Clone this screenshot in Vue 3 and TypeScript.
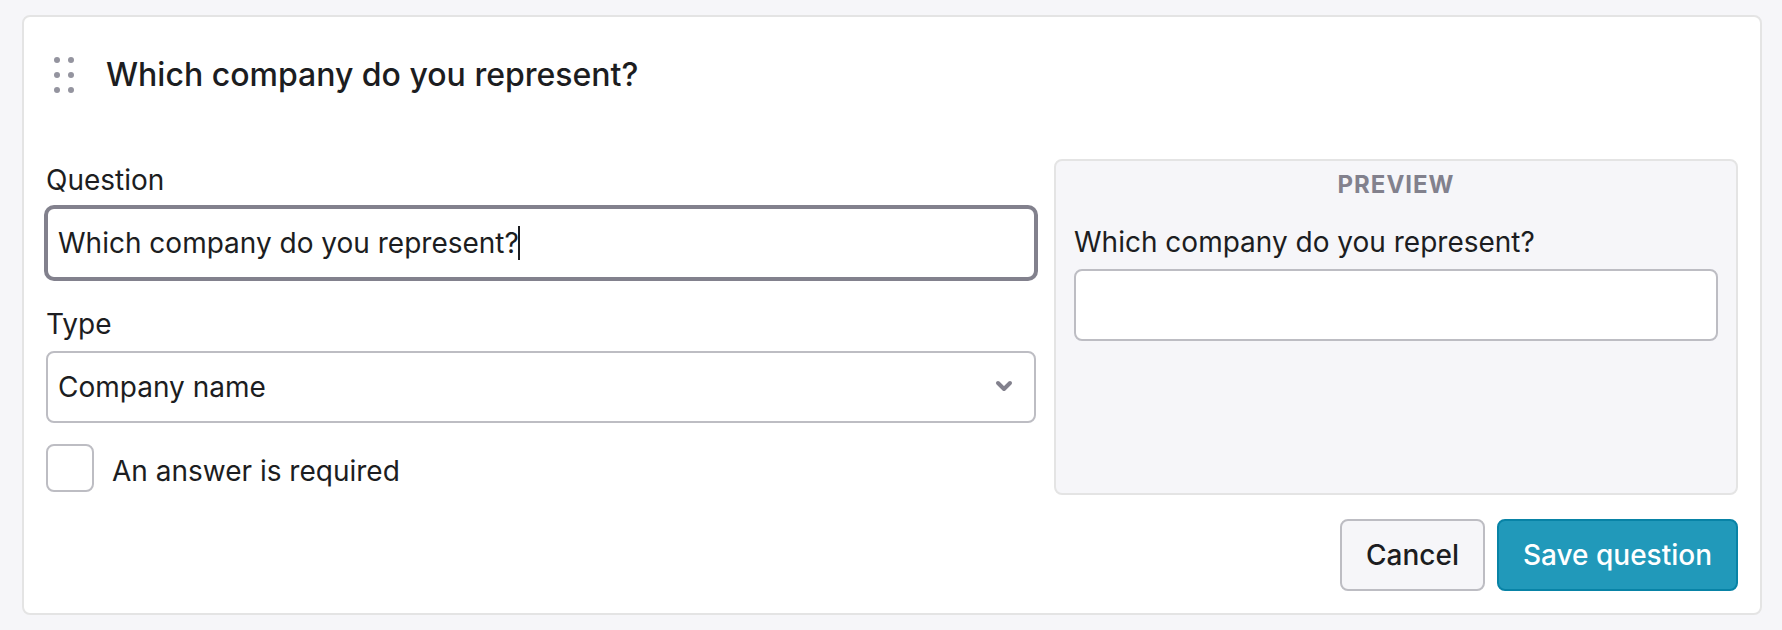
<script setup lang="ts">
import { computed, nextTick, onMounted, ref } from 'vue'

const question = ref('Which company do you represent?')
const answerType = ref('Company name')
const required = ref(false)
const previewAnswer = ref('')

const answerTypes = ['Company name', 'Short text', 'Long text', 'Multiple choice']

const handleDots = [12, 27, 42].flatMap((y) => [11, 25].map((x) => ({ x, y })))

const questionInput = ref<HTMLInputElement | null>(null)
const focused = ref(false)
const caretOffset = ref(0)
const caretStyle = computed(() => ({ left: `${caretOffset.value}px` }))

function placeCaret(): void {
  const input = questionInput.value
  if (!input) return
  const context = document.createElement('canvas').getContext('2d')
  if (!context) return
  const style = getComputedStyle(input)
  context.font = `${style.fontWeight} ${style.fontSize} ${style.fontFamily}`
  const before = input.value.slice(0, input.selectionStart ?? input.value.length)
  const inset = parseFloat(style.paddingLeft) + parseFloat(style.borderLeftWidth)
  caretOffset.value = Math.floor(inset + context.measureText(before).width - input.scrollLeft)
}

onMounted(async () => {
  await nextTick()
  const input = questionInput.value
  if (!input) return
  input.focus()
  input.setSelectionRange(input.value.length, input.value.length)
  focused.value = true
  placeCaret()
  document.fonts.ready.then(placeCaret)
})
</script>

<template>
  <main class="page">
    <form class="card" @submit.prevent>
      <header class="card-header">
        <button class="handle" type="button" aria-label="Reorder question">
          <svg width="36" height="54" viewBox="0 0 36 54" aria-hidden="true">
            <circle v-for="dot in handleDots" :key="`${dot.x}-${dot.y}`" :cx="dot.x" :cy="dot.y" r="3" />
          </svg>
        </button>
        <h2 class="title">{{ question }}</h2>
      </header>

      <div class="columns">
        <div class="fields">
          <div class="field">
            <label for="question">Question</label>
            <div class="control">
              <input
                id="question"
                ref="questionInput"
                v-model="question"
                class="box question-input"
                :class="{ active: focused }"
                type="text"
                autocomplete="off"
                spellcheck="false"
                @focus="focused = true"
                @blur="focused = false"
                @input="placeCaret"
                @keyup="placeCaret"
                @click="placeCaret"
              />
              <span v-if="focused" class="caret" :style="caretStyle"></span>
            </div>
          </div>

          <div class="field">
            <label for="type">Type</label>
            <div class="control">
              <select id="type" v-model="answerType" class="box">
                <option v-for="item in answerTypes" :key="item">{{ item }}</option>
              </select>
              <svg class="chevron" width="20" height="16" viewBox="0 0 20 16" aria-hidden="true">
                <path d="M4 4 L10 10 L16 4" />
              </svg>
            </div>
          </div>

          <div class="check-row">
            <input id="required" v-model="required" class="check" type="checkbox" />
            <label for="required">An answer is required</label>
          </div>
        </div>

        <section class="preview" aria-labelledby="preview-title">
          <h3 id="preview-title" class="preview-title">PREVIEW</h3>
          <div class="field">
            <label for="preview-answer">{{ question }}</label>
            <input id="preview-answer" v-model="previewAnswer" class="box" type="text" />
          </div>
        </section>
      </div>

      <footer class="actions">
        <button class="button" type="button">Cancel</button>
        <button class="button primary" type="submit">Save question</button>
      </footer>
    </form>
  </main>
</template>

<style>
body {
  background: #f6f6f9;
}
</style>

<style scoped>
.page,
.page * {
  box-sizing: border-box;
}

.page {
  padding: 15px 20px 15px 22px;
  background: #f6f6f9;
  color: #1c1d21;
  font-family: Inter, "Liberation Sans", sans-serif;
  font-size: 28px;
  line-height: 42px;
}

.card {
  padding: 22px;
  border: 2px solid #e4e4e4;
  border-radius: 8px;
  background: #fff;
}

.card-header {
  display: flex;
  align-items: center;
  gap: 24px;
  min-height: 72px;
  margin-bottom: 48px;
}

.handle {
  display: flex;
  padding: 0;
  border: 0;
  background: none;
  fill: #94949f;
  cursor: grab;
}

.title {
  margin: 0;
  font-size: 32px;
  font-weight: 500;
}

.columns {
  display: grid;
  grid-template-columns: 55fr 38fr;
  gap: 18px;
}

.fields {
  display: flex;
  flex-direction: column;
}

.field {
  display: flex;
  flex-direction: column;
  gap: 6px;
}

.fields .field + .field {
  margin-top: 24px;
}

.control {
  position: relative;
}

.box {
  display: block;
  width: 100%;
  height: 72px;
  padding: 0 10px;
  border: 2px solid #bdbdc3;
  border-radius: 8px;
  outline: none;
  background: #fff;
  color: inherit;
  font: inherit;
  appearance: none;
}

.question-input {
  caret-color: transparent;
}

.box:focus,
.box.active {
  border-color: #82818d;
  box-shadow: 0 0 0 2px #82818d;
}

.caret {
  position: absolute;
  top: 19px;
  width: 2px;
  height: 34px;
  background: #1c1d21;
  pointer-events: none;
}

.chevron {
  position: absolute;
  top: 28px;
  right: 22px;
  fill: none;
  stroke: #82818d;
  stroke-width: 4;
  stroke-linecap: round;
  stroke-linejoin: round;
  pointer-events: none;
}

.check-row {
  display: flex;
  gap: 18px;
  margin-top: 21px;
  line-height: 48px;
}

.check-row label {
  padding-top: 3px;
}

.check {
  width: 48px;
  height: 48px;
  margin: 0;
  border: 2px solid #bdbdc3;
  border-radius: 8px;
  background: #fff;
  appearance: none;
}

.check:checked {
  background: #2199ba;
}

.preview {
  padding: 4px 18px 18px;
  border: 2px solid #e4e4e4;
  border-radius: 8px;
  background: #f6f6f9;
}

.preview-title {
  margin: 0 0 16px;
  color: #82818d;
  font-size: 24px;
  font-weight: 700;
  letter-spacing: 1px;
  line-height: 40px;
  text-align: center;
}

.actions {
  display: flex;
  justify-content: flex-end;
  gap: 12px;
  margin-top: 24px;
}

.button {
  height: 72px;
  padding: 0 24px;
  border: 2px solid #bdbdc3;
  border-radius: 8px;
  background: #f6f6f9;
  color: inherit;
  font: inherit;
  font-weight: 500;
  cursor: pointer;
}

.primary {
  border-color: #0883a6;
  background: #2199ba;
  color: #fff;
}
</style>
